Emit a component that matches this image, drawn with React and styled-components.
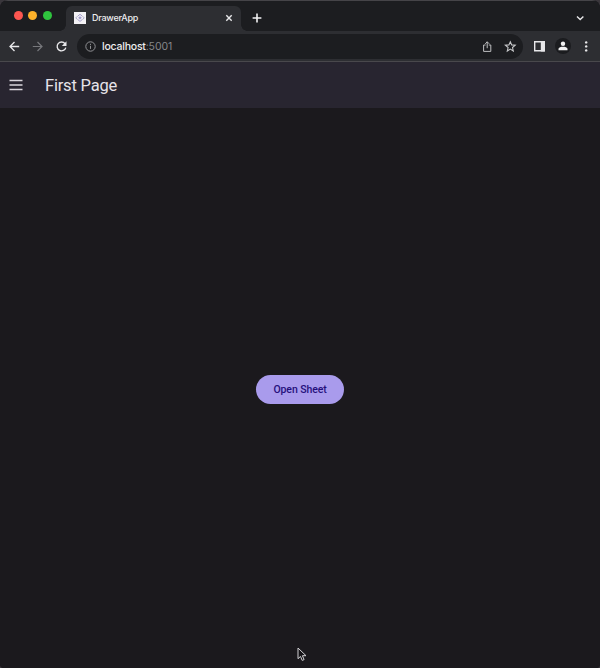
import React from 'react';
import styled, { createGlobalStyle } from 'styled-components';

const GlobalStyle = createGlobalStyle`
  * { box-sizing: border-box; }
  body { margin: 0; background: #39363b; overflow: hidden; }
`;

const Window = styled.div`
  position: relative;
  width: 600px;
  height: 668px;
  display: flex;
  flex-direction: column;
  overflow: hidden;
  border-radius: 8px 8px 4px 4px;
  background: #1b191d;
  font-family: Inter, sans-serif;
`;

const TabStrip = styled.header`
  height: 31px;
  flex: none;
  display: flex;
  align-items: flex-end;
  border-top: 1px solid #454448;
  background: #1c1d20;
`;

const TrafficLights = styled.div`
  width: 66px;
  height: 30px;
  padding: 0 0 1px 13.5px;
  display: flex;
  align-items: center;
  gap: 5.5px;
`;

const Light = styled.span`
  width: 9px;
  height: 9px;
  border-radius: 50%;
  background: ${({ $color }) => $color};
`;

const Tab = styled.div`
  position: relative;
  width: 175px;
  height: 25px;
  padding: 0 7px 1px 8px;
  display: flex;
  align-items: center;
  border-radius: 6px 6px 0 0;
  background: #2d2e32;
  color: #ececee;
  &::before, &::after {
    content: '';
    position: absolute;
    bottom: 0;
    width: 6px;
    height: 6px;
  }
  &::before {
    left: -6px;
    background: radial-gradient(circle at 0 0, transparent 5.5px, #2d2e32 6px);
  }
  &::after {
    right: -6px;
    background: radial-gradient(circle at 100% 0, transparent 5.5px, #2d2e32 6px);
  }
`;

const TabTitle = styled.span`
  flex: 1;
  margin-left: 6px;
  font-size: 9px;
  font-weight: 500;
  line-height: 12px;
  letter-spacing: -0.24px;
`;

const Glyph = styled.svg`
  display: block;
  flex: none;
  fill: none;
  stroke: ${({ $color }) => $color || '#e8e8ea'};
  stroke-width: ${({ $weight }) => $weight || 1.4};
`;

const NewTab = styled.div`
  flex: 1;
  height: 25px;
  padding: 0 0 1px 10.5px;
  display: flex;
  align-items: center;
`;

const TabMenu = styled.div`
  width: 25px;
  height: 25px;
  padding-bottom: 1px;
  display: flex;
  align-items: center;
`;

const Toolbar = styled.nav`
  height: 30px;
  flex: none;
  padding: 0 7px 0 8px;
  display: flex;
  align-items: center;
  background: #2d2e32;
`;

const Navigation = styled.div`
  width: 69px;
  display: flex;
  gap: 10.3px;
`;

const AddressBar = styled.div`
  width: 446px;
  height: 25px;
  padding: 0 6px 0 7px;
  display: flex;
  align-items: center;
  border-radius: 13px;
  background: #1c1d20;
`;

const Address = styled.span`
  flex: 1;
  margin-left: 5px;
  padding-top: 1px;
  color: #eeeeef;
  font-size: 10.5px;
  font-weight: 500;
  line-height: 14px;
  letter-spacing: -0.22px;
`;

const Port = styled.span`
  color: #85868a;
  font-weight: 400;
  letter-spacing: -0.08px;
`;

const AddressActions = styled.div`
  display: flex;
  gap: 10px;
`;

const BrowserActions = styled.div`
  flex: 1;
  padding-left: 10px;
  display: flex;
  align-items: center;
  justify-content: space-between;
`;

const Profile = styled.span`
  width: 16px;
  height: 16px;
  display: grid;
  place-items: center;
  border-radius: 50%;
  background: #1b1c1f;
`;

const AppBar = styled.div`
  height: 47px;
  flex: none;
  padding: 0 9px;
  display: flex;
  align-items: center;
  border-top: 1px solid #49484c;
  background: #282530;
`;

const PageTitle = styled.h1`
  margin: 1px 0 0 22px;
  color: #e6e3e9;
  font: 400 16.5px/22px Roboto, sans-serif;
  letter-spacing: -0.2px;
`;

const Content = styled.main`
  flex: 1;
  display: flex;
  align-items: center;
  justify-content: center;
  background: #1b191d;
`;

const SheetButton = styled.button`
  width: 88px;
  height: 29px;
  margin: 2px 0 0;
  padding: 1px 0 0;
  border: 0;
  border-radius: 15px;
  background: #a99bec;
  color: #26107c;
  font: 500 10.5px/14px Roboto, sans-serif;
  letter-spacing: -0.1px;
`;

const Pointer = styled(Glyph)`
  position: absolute;
  left: 297px;
  top: 647px;
`;

function Favicon() {
  return (
    <Glyph width="12" height="12" viewBox="0 0 12 12" $weight={1}>
      <rect width="12" height="12" fill="#f3f2f5" stroke="none" />
      <path d="M3.7 4.2 6 2.3l2.3 1.9M3.7 7.5 6 9.4l2.3-1.9" stroke="#a39dcb" />
      <path d="m3.3 4.3-1.5 1.6 1.5 1.6M8.7 4.3l1.5 1.6-1.5 1.6" stroke="#aaa6c8" />
      <path d="m6 4.2 1.8 1.6L6 7.4 4.2 5.8Z" fill="#a39dd0" stroke="none" />
    </Glyph>
  );
}

export default function App() {
  return (
    <>
      <GlobalStyle />
      <Window>
        <TabStrip>
          <TrafficLights>
            <Light $color="#fc5650" />
            <Light $color="#fdb12a" />
            <Light $color="#2fc53e" />
          </TrafficLights>
          <Tab>
            <Favicon />
            <TabTitle>DrawerApp</TabTitle>
            <Glyph width="10" height="10" viewBox="0 0 10 10">
              <path d="m2.3 2.3 5.4 5.4m0-5.4-5.4 5.4" />
            </Glyph>
          </Tab>
          <NewTab>
            <Glyph width="10" height="10" viewBox="0 0 10 10" $color="#f2f2f3" $weight={1.6}>
              <path d="M5 .6v8.8M.6 5h8.8" />
            </Glyph>
          </NewTab>
          <TabMenu>
            <Glyph width="10" height="10" viewBox="0 0 10 10">
              <path d="m2 3.5 3.2 3 3.2-3" />
            </Glyph>
          </TabMenu>
        </TabStrip>
        <Toolbar>
          <Navigation>
            <Glyph width="13" height="13" viewBox="0 0 13 13" $weight={1.3}>
              <path d="M11.2 6.5h-9M6.5 2 2 6.5 6.5 11" />
            </Glyph>
            <Glyph width="13" height="13" viewBox="0 0 13 13" $color="#77787c" $weight={1.2}>
              <path d="M1.8 6.5h9M6.5 2 11 6.5 6.5 11" />
            </Glyph>
            <Glyph width="13" height="13" viewBox="0 0 13 13" $weight={1.4}>
              <path d="M10 3.7A4.4 4.4 0 1 0 10.8 7.6" />
              <path d="M11.5 1.2v4.7H6.8Z" fill="#e8e8ea" stroke="none" />
            </Glyph>
          </Navigation>
          <AddressBar>
            <Glyph width="13" height="13" viewBox="0 0 13 13" $color="#909194" $weight={1}>
              <circle cx="6.5" cy="6.5" r="4.7" />
              <path d="M6.5 5.8v3.1M6.5 3.8v1.1" />
            </Glyph>
            <Address>localhost<Port>:5001</Port></Address>
            <AddressActions>
              <Glyph width="13" height="13" viewBox="0 0 13 13" $color="#bebfc1" $weight={1}>
                <path d="M4.6 5H2.6v6.4h7.2V5h-2M6.2 8.2V1.8M4.2 3.8l2-2 2 2" />
              </Glyph>
              <Glyph width="13" height="13" viewBox="0 0 13 13" $color="#c5c6c8" $weight={1.1}>
                <path d="m6.3 1.8 1.4 3.1 3.5.3-2.7 2.3.8 3.5-3-1.9-3 1.9.8-3.5-2.7-2.3 3.5-.3Z" />
              </Glyph>
            </AddressActions>
          </AddressBar>
          <BrowserActions>
            <Glyph width="13" height="13" viewBox="0 0 13 13">
              <path d="M1.7 1.7h9.5v9.1H1.7Z" />
              <path d="M7.8 1h4.1v10.5H7.8Z" fill="#e8e8ea" stroke="none" />
            </Glyph>
            <Profile>
              <Glyph width="10" height="10" viewBox="0 0 10 10">
                <g fill="#f2f2f3" stroke="none">
                  <circle cx="5" cy="2.8" r="2.2" />
                  <path d="M.5 9.3V7.8C.5 6.3 3 5.7 5 5.7s4.5.6 4.5 2.1v1.5Z" />
                </g>
              </Glyph>
            </Profile>
            <Glyph width="13" height="13" viewBox="0 0 13 13">
              <g fill="#e8e8ea" stroke="none">
                <circle cx="6.2" cy="2.4" r="1.2" />
                <circle cx="6.2" cy="6.4" r="1.2" />
                <circle cx="6.2" cy="10.4" r="1.2" />
              </g>
            </Glyph>
          </BrowserActions>
        </Toolbar>
        <AppBar>
          <Glyph width="14" height="12" viewBox="0 0 14 12" $color="#d9d6dc" $weight={1.4}>
            <path d="M.5 1.5h13M.5 6h13M.5 10.5h13" />
          </Glyph>
          <PageTitle>First Page</PageTitle>
        </AppBar>
        <Content>
          <SheetButton>Open Sheet</SheetButton>
        </Content>
        <Pointer width="10" height="15" viewBox="0 0 10 15" $color="#d2d1d4" $weight={1}>
          <path d="M1 1v10.7l2.5-2.3 1.7 4 1.9-.8-1.7-3.9H9Z" fill="#141216" />
        </Pointer>
      </Window>
    </>
  );
}
